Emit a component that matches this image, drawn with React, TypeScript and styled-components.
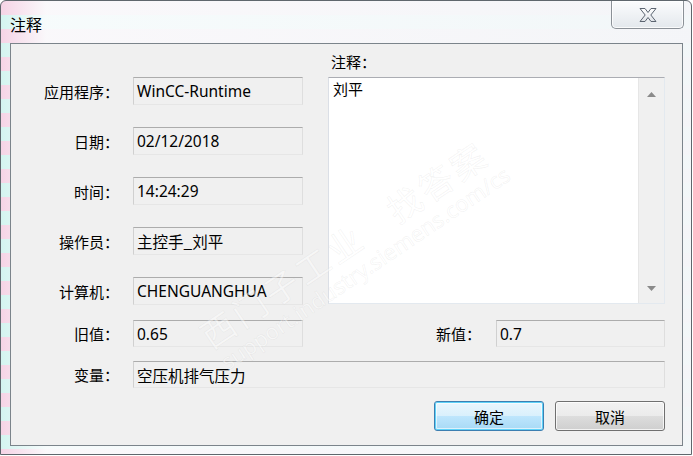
import React from "react";
import styled, { createGlobalStyle } from "styled-components";

const GlobalStyle = createGlobalStyle`
  html, body {
    margin: 0;
    padding: 0;
    background: #ffffff;
  }
  body {
    font-family: "Noto Sans CJK SC", "Noto Sans", sans-serif;
    color: #000;
  }
`

const Window = styled.div`
  position: relative;
  width: 692px;
  height: 455px;
  box-sizing: border-box;
  border: 1px solid #5f676d;
  border-radius: 6px 6px 0 0;
  display: flex;
  flex-direction: column;
  overflow: hidden;
  background:
    linear-gradient(to right, rgba(255, 255, 255, 0) 0, rgba(250, 252, 253, 0.9) 45px, rgba(244, 247, 249, 0.95) 100%),
    repeating-linear-gradient(180deg, #f6d4e6 0 14px, #d4f4f0 14px 28px);
`

const TitleBar = styled.div`
  height: 42px;
  display: flex;
  align-items: flex-start;
  justify-content: space-between;
  padding-left: 9px;
`

const Title = styled.div`
  font-size: 16px;
  line-height: 20px;
  margin-top: 13px;
`

const CloseButton = styled.div`
  width: 73px;
  height: 28px;
  margin-right: 7px;
  box-sizing: border-box;
  border: 1px solid #8b9197;
  border-top: none;
  border-radius: 0 0 5px 5px;
  background: linear-gradient(to bottom, #fbfcfd 0%, #eef1f4 55%, #e3e8ec 100%);
  box-shadow: inset 0 0 0 1px rgba(255, 255, 255, 0.8);
  display: flex;
  align-items: center;
  justify-content: center;
`

const Client = styled.div`
  flex: 1;
  margin: 0 8px 8px 9px;
  border: 1px solid #7b848b;
  background: #f0f0f0;
  padding: 0 17px 14px 0;
  display: flex;
  flex-direction: column;
`

const TopSection = styled.div`
  display: flex;
`

const FieldColumn = styled.div`
  padding-top: 33px;
  display: flex;
  flex-direction: column;
  gap: 22px;
`

const Row = styled.div<{ $mt?: number }>`
  display: flex;
  align-items: center;
  margin-top: ${p => p.$mt ?? 0}px;
`

const Label = styled.div`
  width: 122px;
  box-sizing: border-box;
  padding-right: 14px;
  text-align: right;
  font-size: 15px;
  white-space: nowrap;
`

const InlineLabel = styled.div`
  font-size: 15px;
  margin-right: 15px;
  white-space: nowrap;
`

const ValueBox = styled.div<{ $w?: number; $h?: number }>`
  ${p => (p.$w ? `width: ${p.$w}px;` : "flex: 1;")}
  height: ${p => p.$h ?? 28}px;
  box-sizing: border-box;
  border: 1px solid;
  border-color: #acacac #dedede #e6e6e6 #d0d0d0;
  background: #f0f0f0;
  padding: 0 3px;
  display: flex;
  align-items: center;
  font-family: "Noto Sans", "Noto Sans CJK SC", sans-serif;
  font-size: 15.5px;
  white-space: nowrap;
`

const CnValue = styled.span`
  font-family: "Noto Sans CJK SC", sans-serif;
  font-size: 15.5px;
`

const CommentColumn = styled.div`
  margin-left: 25px;
  flex: 1;
  display: flex;
  flex-direction: column;
`

const CommentLabel = styled.div`
  height: 33px;
  box-sizing: border-box;
  padding: 7px 0 0 3px;
  font-size: 15px;
`

const CommentBox = styled.div`
  height: 227px;
  box-sizing: border-box;
  border: 1px solid;
  border-color: #abadb3 #e3e9ef #e3e9ef #dbdfe6;
  background: #fff;
  display: flex;
`

const CommentText = styled.div`
  flex: 1;
  padding: 1px 4px;
  font-size: 15px;
  line-height: 20px;
`

const ScrollBar = styled.div`
  width: 25px;
  background: #f0f0f0;
  border-left: 1px solid #e6e6e6;
  display: flex;
  flex-direction: column;
  justify-content: space-between;
  align-items: center;
  padding: 14px 0 12px;
`

const SplitRow = styled.div`
  display: flex;
  align-items: center;
  justify-content: space-between;
  margin-top: 15px;
`

const Group = styled.div`
  display: flex;
  align-items: center;
`

const ButtonRow = styled.div`
  display: flex;
  justify-content: flex-end;
  gap: 11px;
  margin-top: 13px;
`

const Button = styled.button<{ $primary?: boolean }>`
  width: 110px;
  height: 30px;
  box-sizing: border-box;
  border-radius: 3px;
  font-family: "Noto Sans CJK SC", sans-serif;
  font-size: 15px;
  color: #000;
  padding: 0;
  border: 1px solid ${p => (p.$primary ? "#3c7fb1" : "#707070")};
  background: ${p =>
    p.$primary
      ? "linear-gradient(to bottom, #eaf6fd 0%, #d9f0fc 50%, #bee6fd 50%, #a7d9f5 100%)"
      : "linear-gradient(to bottom, #f2f2f2 0%, #ebebeb 50%, #dddddd 50%, #cfcfcf 100%)"};
  box-shadow: ${p =>
    p.$primary
      ? "inset 0 0 0 1px #5fd2f8, inset 0 0 0 2px rgba(255,255,255,0.6)"
      : "inset 0 0 0 1px rgba(255,255,255,0.75)"};
`

// faint watermark lying over the dialog
const Watermark = styled.div`
  position: absolute;
  left: 192px;
  top: 322px;
  transform-origin: 0 0;
  transform: rotate(-34deg);
  pointer-events: none;
  white-space: nowrap;
  color: rgba(255, 255, 255, 0.45);
  -webkit-text-stroke: 0.6px rgba(170, 170, 170, 0.16);
`

const WatermarkCn = styled.div`
  font-family: "Noto Sans CJK SC", sans-serif;
  font-size: 34px;
  line-height: 38px;
  letter-spacing: 4px;
`

const WatermarkUrl = styled.div`
  font-family: "Noto Sans", sans-serif;
  font-size: 22px;
  line-height: 24px;
  margin-left: 2px;
`

const CloseIcon = () => (
  <svg width="20" height="16" viewBox="0 0 20 16">
    <defs>
      <linearGradient id="xg" x1="0" y1="0" x2="0" y2="1">
        <stop offset="0" stopColor="#ffffff" />
        <stop offset="1" stopColor="#dfe3e8" />
      </linearGradient>
    </defs>
    <path
      d="M2 1.5 H7 L10 5.5 L13 1.5 H18 L12.8 8 L18 14.5 H13 L10 10.5 L7 14.5 H2 L7.2 8 Z"
      fill="url(#xg)"
      stroke="#5b6470"
      strokeWidth="1"
      strokeLinejoin="round"
    />
  </svg>
)

const Arrow = ({ up }: { up?: boolean }) => (
  <svg width="9" height="5" viewBox="0 0 9 5">
    <path d={up ? "M0 5 L4.5 0 L9 5 Z" : "M0 0 L9 0 L4.5 5 Z"} fill="#8a8a8a" />
  </svg>
)

const fields: { label: string; value: string; cn?: boolean }[] = [
  { label: "应用程序：", value: "WinCC-Runtime" },
  { label: "日期：", value: "02/12/2018" },
  { label: "时间：", value: "14:24:29" },
  { label: "操作员：", value: "主控手_刘平", cn: true },
  { label: "计算机：", value: "CHENGUANGHUA" },
]

export default function App() {
  return (
    <>
      <GlobalStyle />
      <Window>
        <TitleBar>
          <Title>注释</Title>
          <CloseButton>
            <CloseIcon />
          </CloseButton>
        </TitleBar>
        <Client>
          <TopSection>
            <FieldColumn>
              {fields.map(f => (
                <Row key={f.label}>
                  <Label>{f.label}</Label>
                  <ValueBox $w={170}>{f.cn ? <CnValue>{f.value}</CnValue> : f.value}</ValueBox>
                </Row>
              ))}
            </FieldColumn>
            <CommentColumn>
              <CommentLabel>注释：</CommentLabel>
              <CommentBox>
                <CommentText>刘平</CommentText>
                <ScrollBar>
                  <Arrow up />
                  <Arrow />
                </ScrollBar>
              </CommentBox>
            </CommentColumn>
          </TopSection>
          <SplitRow>
            <Group>
              <Label>旧值：</Label>
              <ValueBox $w={170} $h={27}>0.65</ValueBox>
            </Group>
            <Group>
              <InlineLabel>新值：</InlineLabel>
              <ValueBox $w={169} $h={27}>0.7</ValueBox>
            </Group>
          </SplitRow>
          <Row $mt={14}>
            <Label>变量：</Label>
            <ValueBox $h={27}>
              <CnValue>空压机排气压力</CnValue>
            </ValueBox>
          </Row>
          <ButtonRow>
            <Button $primary>确定</Button>
            <Button>取消</Button>
          </ButtonRow>
        </Client>
        <Watermark>
          <WatermarkCn>西门子工业&nbsp;&nbsp;&nbsp;找答案</WatermarkCn>
          <WatermarkUrl>support.industry.siemens.com/cs</WatermarkUrl>
        </Watermark>
      </Window>
    </>
  );
}
